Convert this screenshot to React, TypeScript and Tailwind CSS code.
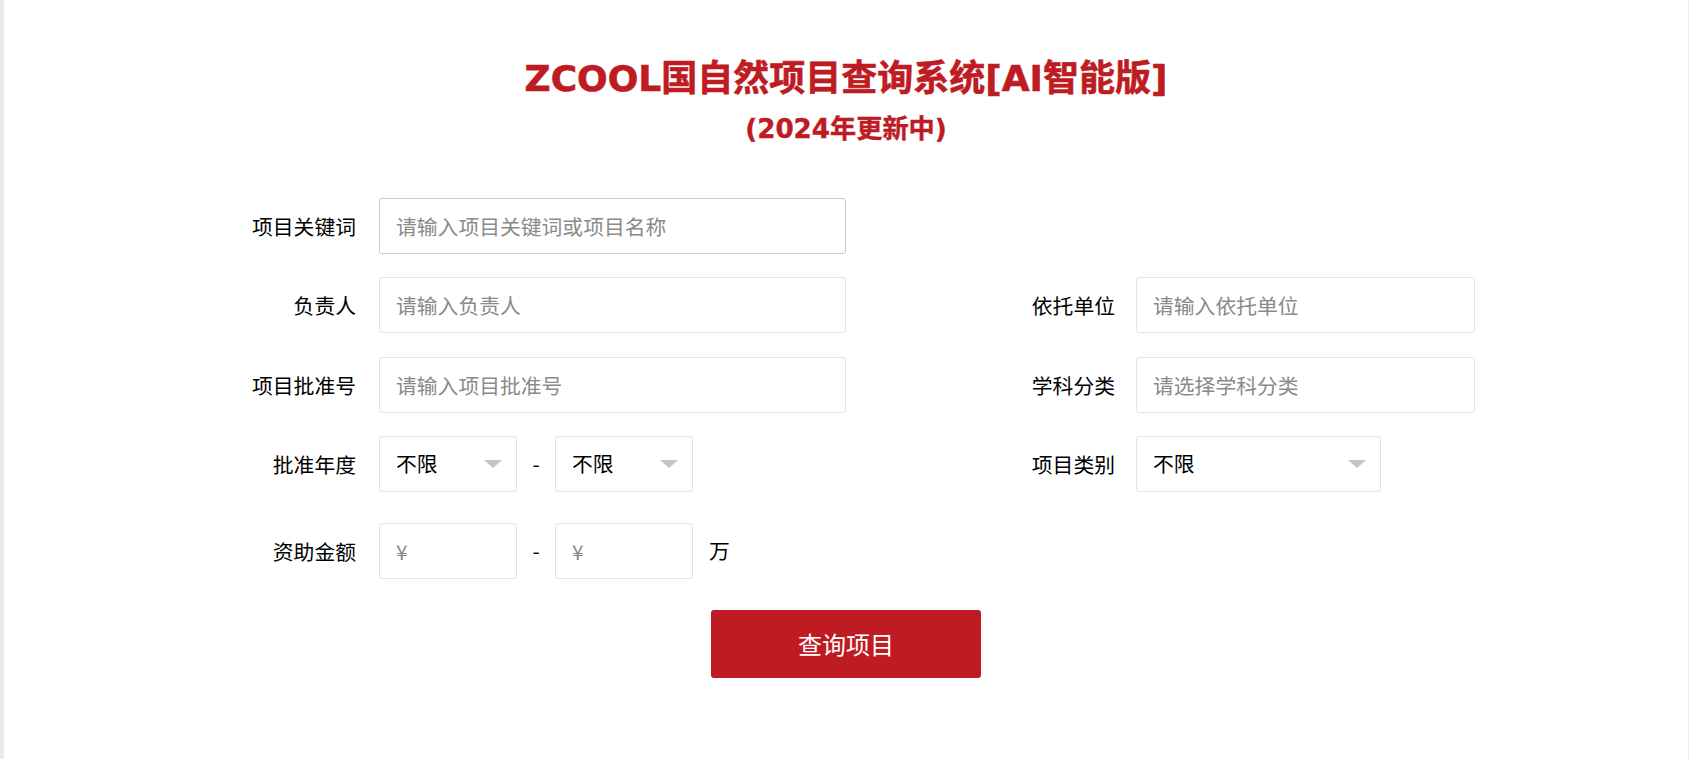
import type { ReactNode } from 'react';

const font = "font-['Noto_Sans_CJK_SC','Noto_Sans',sans-serif]";

function Label({ children, right }: { children: ReactNode; right?: boolean }) {
  return (
    <div
      className={`w-[110px] shrink-0 text-right text-[20.8px] leading-none text-black ${right ? 'mr-[21px]' : 'mr-[23px]'}`}
    >
      {children}
    </div>
  );
}

function TextInput({ placeholder, width, strong }: { placeholder: string; width: string; strong?: boolean }) {
  return (
    <input
      type="text"
      placeholder={placeholder}
      className={`${width} h-[56px] rounded-[3px] border bg-white pl-[16px] text-[20.8px] text-black outline-none placeholder:text-[#8a8a8a] ${strong ? 'border-[#c9c9c9]' : 'border-[#e3e3e3]'}`}
    />
  );
}

function Select({ width }: { width: string }) {
  return (
    <div
      className={`${width} flex h-[56px] items-center justify-between rounded-[3px] border border-[#e3e3e3] bg-white pl-[16px] pr-[14px] text-[20.8px] text-black`}
    >
      <span>不限</span>
      <svg width="18" height="8" viewBox="0 0 18 8">
        <polygon points="0,0 18,0 9,8" fill="#c4c4c4" />
      </svg>
    </div>
  );
}

function Dash() {
  return <span className="w-[38px] text-center text-[20.8px] text-black">-</span>;
}

export default function App() {
  return (
    <div className={`min-h-screen bg-[#ebebeb] pl-[4px] pr-px ${font}`}>
      <div className="flex h-[759px] flex-col items-center bg-white">
        <h1 className="mt-[59px] font-['DejaVu_Sans','Noto_Sans_CJK_SC',sans-serif] text-[36px] leading-[40px] font-bold text-[#be1b22] [-webkit-text-stroke:0.6px_#be1b22]">
          ZCOOL国自然项目查询系统[AI智能版]
        </h1>
        <p className="mt-[14px] font-['DejaVu_Sans','Noto_Sans_CJK_SC',sans-serif] text-[26.2px] leading-[32px] font-bold text-[#be1b22] [-webkit-text-stroke:0.4px_#be1b22]">
          (2024年更新中)
        </p>

        <div className="mt-[53px] flex w-full flex-col pl-[242px]">
          <div className="flex h-[56px] items-center">
            <Label>项目关键词</Label>
            <TextInput placeholder="请输入项目关键词或项目名称" width="w-[467px]" strong />
          </div>

          <div className="mt-[23px] flex h-[56px] items-center">
            <Label>负责人</Label>
            <TextInput placeholder="请输入负责人" width="w-[467px]" />
            <div className="w-[159px]" />
            <Label right>依托单位</Label>
            <TextInput placeholder="请输入依托单位" width="w-[339px]" />
          </div>

          <div className="mt-[24px] flex h-[56px] items-center">
            <Label>项目批准号</Label>
            <TextInput placeholder="请输入项目批准号" width="w-[467px]" />
            <div className="w-[159px]" />
            <Label right>学科分类</Label>
            <TextInput placeholder="请选择学科分类" width="w-[339px]" />
          </div>

          <div className="mt-[23px] flex h-[56px] items-center">
            <Label>批准年度</Label>
            <div className="flex w-[467px] items-center">
              <Select width="w-[138px]" />
              <Dash />
              <Select width="w-[138px]" />
            </div>
            <div className="w-[159px]" />
            <Label right>项目类别</Label>
            <Select width="w-[245px]" />
          </div>

          <div className="mt-[31px] flex h-[56px] items-center">
            <Label>资助金额</Label>
            <TextInput placeholder="¥" width="w-[138px]" />
            <Dash />
            <TextInput placeholder="¥" width="w-[138px]" />
            <span className="ml-[16px] text-[20.8px] text-black">万</span>
          </div>
        </div>

        <button
          type="button"
          className="mt-[31px] h-[68px] w-[270px] rounded-[3px] bg-[#be1b22] text-[24px] text-white"
        >
          查询项目
        </button>
      </div>
    </div>
  );
}
